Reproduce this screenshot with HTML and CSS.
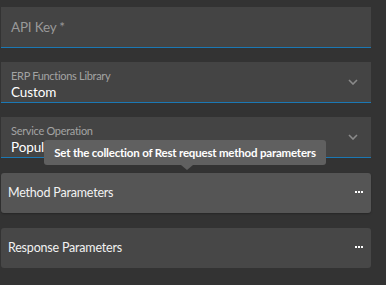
FILE: index.html
```html
<!DOCTYPE html>
<html>
<head>
	<title>Service Settings</title>
	<link rel="stylesheet" href="styles.css">
</head>
<body>
	<div class="panel">
		<div class="field">
			<span class="placeholder">API Key *</span>
		</div>
		<div class="field select">
			<div class="field-text">
				<span class="label">ERP Functions Library</span>
				<span class="value">Custom</span>
			</div>
			<svg class="chevron" width="10" height="6" viewBox="0 0 10 6"><path d="M1 1l4 4 4-4" fill="none" stroke="#8a8a8a" stroke-width="1.6"/></svg>
		</div>
		<div class="field select">
			<div class="field-text">
				<span class="label">Service Operation</span>
				<span class="value">Populate</span>
			</div>
			<svg class="chevron" width="10" height="6" viewBox="0 0 10 6"><path d="M1 1l4 4 4-4" fill="none" stroke="#8a8a8a" stroke-width="1.6"/></svg>
		</div>
		<div class="group active">
			<span>Method Parameters</span>
			<span class="dots"><i></i><i></i><i></i></span>
		</div>
		<div class="group">
			<span>Response Parameters</span>
			<span class="dots"><i></i><i></i><i></i></span>
		</div>
		<div class="tooltip">Set the collection of Rest request method parameters</div>
	</div>
</body>
</html>
```

FILE: styles.css
```css
* {
	margin: 0;
	padding: 0;
	box-sizing: border-box;
}
body {
	background: #333;
	font-family: "Lato", sans-serif;
	color: #eee;
}
.panel {
	position: relative;
	width: 371px;
	padding: 7px 0 0 1px;
	display: flex;
	flex-direction: column;
}
.field {
	height: 41px;
	background: #444;
	border-bottom: 1px solid #1b78b4;
	padding: 0 11px 0 10px;
	display: flex;
	align-items: center;
	margin-bottom: 14px;
}
.placeholder {
	font-size: 13.5px;
	letter-spacing: -0.2px;
	color: #999;
}
.select {
	justify-content: space-between;
}
.field-text {
	display: flex;
	flex-direction: column;
	padding-top: 4px;
}
.label {
	font-size: 11px;
	letter-spacing: -0.3px;
	color: #a3a3a3;
	line-height: 15px;
}
.value {
	font-size: 13.5px;
	letter-spacing: -0.1px;
	color: #fff;
	line-height: 18px;
}
.chevron {
	margin-right: 2px;
}
.group {
	height: 40px;
	background: #474747;
	border-radius: 3px;
	padding: 0 8px 2px 7px;
	display: flex;
	align-items: center;
	justify-content: space-between;
	font-size: 12.5px;
	letter-spacing: -0.2px;
	color: #f2f2f2;
	margin-bottom: 15px;
}
.group.active {
	background: #555;
	margin-top: 1px;
	box-shadow: 0 1px 2px rgba(0, 0, 0, 0.25);
}
.dots {
	display: flex;
	gap: 1px;
}
.dots i {
	width: 2px;
	height: 2px;
	background: #fff;
	display: block;
}
.tooltip {
	position: absolute;
	left: 44px;
	top: 140px;
	width: 282px;
	height: 25px;
	background: #606060;
	border-radius: 3px;
	font-size: 11.5px;
	font-weight: bold;
	letter-spacing: -0.2px;
	white-space: nowrap;
	color: #fff;
	display: flex;
	align-items: center;
	justify-content: center;
}
.tooltip::after {
	content: "";
	position: absolute;
	left: 137px;
	top: 25px;
	border: 6px solid transparent;
	border-top: 5px solid #606060;
	border-bottom: none;
}
```
